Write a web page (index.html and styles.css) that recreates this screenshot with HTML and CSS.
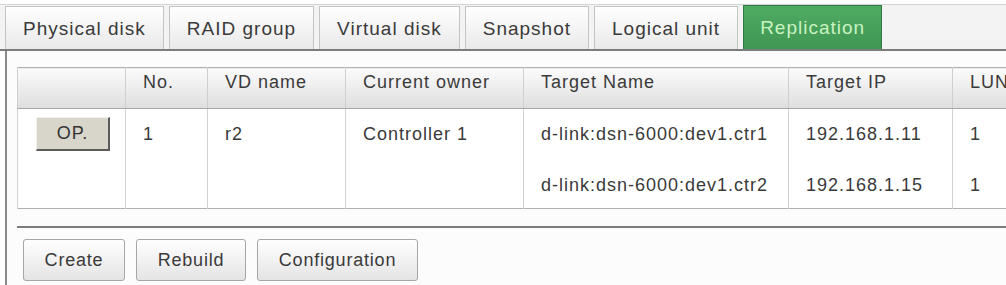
FILE: index.html
```html
<!DOCTYPE html>
<html lang="en">
<head>
    <meta charset="UTF-8">
    <meta name="viewport" content="width=device-width, initial-scale=1.0">
    <title>Replication</title>
    <link rel="stylesheet" href="styles.css">
</head>
<body>
    <!-- タブ -->
    <div class="tabs">
        <div class="tab">Physical disk</div>
        <div class="tab">RAID group</div>
        <div class="tab">Virtual disk</div>
        <div class="tab">Snapshot</div>
        <div class="tab">Logical unit</div>
        <div class="tab active">Replication</div>
    </div>

    <div class="panel">
        <table class="grid">
            <colgroup>
                <col style="width: 108px">
                <col style="width: 82px">
                <col style="width: 138px">
                <col style="width: 178px">
                <col style="width: 265px">
                <col style="width: 164px">
                <col style="width: 125px">
            </colgroup>
            <thead>
                <tr>
                    <th></th>
                    <th>No.</th>
                    <th>VD name</th>
                    <th>Current owner</th>
                    <th>Target Name</th>
                    <th>Target IP</th>
                    <th>LUN</th>
                </tr>
            </thead>
            <tbody>
                <tr class="first">
                    <td rowspan="2" class="op-cell"><button type="button" class="op">OP.</button></td>
                    <td rowspan="2" class="span">1</td>
                    <td rowspan="2" class="span">r2</td>
                    <td rowspan="2" class="span">Controller 1</td>
                    <td>d-link:dsn-6000:dev1.ctr1</td>
                    <td>192.168.1.11</td>
                    <td>1</td>
                </tr>
                <tr class="second">
                    <td>d-link:dsn-6000:dev1.ctr2</td>
                    <td>192.168.1.15</td>
                    <td>1</td>
                </tr>
            </tbody>
        </table>

        <!-- 下部ボタン -->
        <div class="actions">
            <button type="button" class="btn btn-create">Create</button>
            <button type="button" class="btn btn-rebuild">Rebuild</button>
            <button type="button" class="btn btn-config">Configuration</button>
        </div>
    </div>
</body>
</html>
```

FILE: styles.css
```css
/* ページ全体 */
body {
    margin: 0;
    padding: 0;
    font-family: "Liberation Sans", Arial, sans-serif;
    color: #3a3a3a;
    background-color: #fff;
    overflow: hidden;
}

/* タブバー */
.tabs {
    display: flex;
    align-items: flex-end;
    gap: 5px;
    margin-top: 4px;
    padding-left: 5px;
    height: 44px;
    border-top: 1px solid #d4d4d4;
    border-bottom: 2px solid #7c7c7c;
    background-color: #f3f3f3;
}

.tab {
    box-sizing: border-box;
    height: 43px;
    padding: 0 17px;
    line-height: 43px;
    font-size: 19px;
    letter-spacing: 1px;
    color: #3a3a3a;
    border: 1px solid #c4c4c4;
    border-bottom: none;
    background: linear-gradient(#ffffff, #e9e9e9);
}

.tab.active {
    height: 44px;
    padding: 0 16px;
    line-height: 44px;
    color: #c9f3c2;
    border-color: #2f7a43;
    background: linear-gradient(#4fab62, #3f9653);
}

/* 内容パネル */
.panel {
    margin-left: 5px;
    padding: 16px 0 0 10px;
    border-left: 2px solid #8a8a8a;
    background-color: #fcfcfc;
    height: 218px;
    overflow: hidden;
}

/* 一覧テーブル */
.grid {
    width: 1060px;
    table-layout: fixed;
    border-collapse: collapse;
    background-color: #fff;
    font-size: 18px;
    letter-spacing: 1px;
    border: 1px solid #b0b0b0;
}

.grid th {
    height: 36px;
    padding: 4px 0 0 17px;
    vertical-align: top;
    text-align: left;
    font-weight: normal;
    line-height: 20px;
    color: #3a3a3a;
    border-left: 1px solid #cfcfcf;
    border-bottom: 1px solid #a8a8a8;
    background: linear-gradient(#fbfbfb, #dedede);
}

.grid td {
    padding: 0 0 0 17px;
    line-height: 20px;
    white-space: nowrap;
    vertical-align: middle;
    border-left: 1px solid #d2d2d2;
}

.grid tr.first,
.grid tr.second {
    height: 50px;
}

.grid tr.second td {
    padding-top: 4px;
}

.grid tr.first td.span {
    vertical-align: top;
    padding-top: 15px;
}

.grid tr.first td.op-cell {
    vertical-align: top;
    padding: 8px 0 0 18px;
}

/* OPボタン */
.op {
    width: 74px;
    height: 34px;
    padding: 0;
    font-family: "Liberation Sans", Arial, sans-serif;
    font-size: 18px;
    letter-spacing: 1px;
    color: #333;
    background-color: #d8d5cb;
    border: 1px solid #f2f0ea;
    border-right: 2px solid #5c5c5c;
    border-bottom: 2px solid #5c5c5c;
    border-radius: 0;
}

/* 下部ボタンエリア */
.actions {
    display: flex;
    gap: 11px;
    margin-top: 17px;
    padding: 11px 0 0 6px;
    border-top: 2px solid #7c7c7c;
}

.btn {
    height: 42px;
    padding: 0;
    font-family: "Liberation Sans", Arial, sans-serif;
    font-size: 18px;
    letter-spacing: 0.8px;
    color: #3a3a3a;
    border: 1px solid #a6a6a6;
    border-radius: 3px;
    background: linear-gradient(#ffffff, #e4e4e4);
}

.btn-create { width: 102px; }
.btn-rebuild { width: 110px; }
.btn-config { width: 161px; }
```
